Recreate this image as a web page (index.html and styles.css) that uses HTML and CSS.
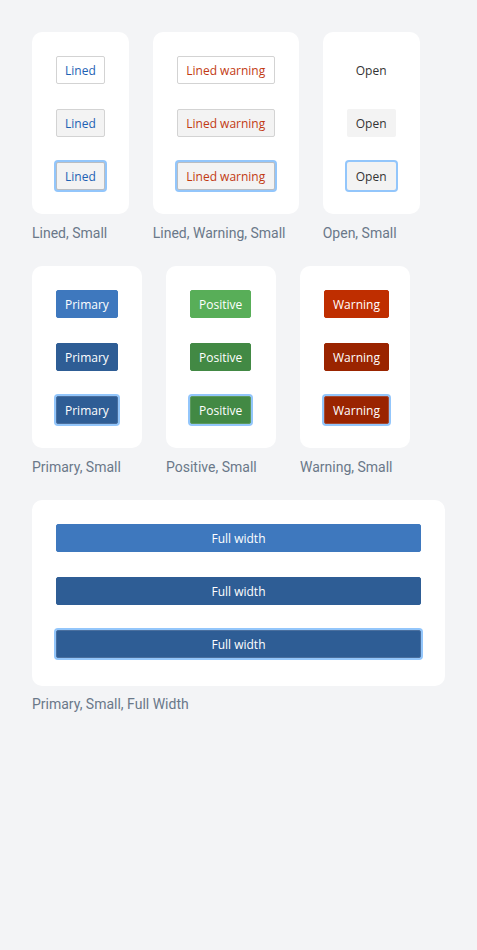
FILE: index.html
```html
<!DOCTYPE html>
<html>
<head>
<meta charset="utf-8">
<link rel="stylesheet" href="styles.css">
</head>
<body>
<div class="page">
  <div class="row">
    <div class="item">
      <div class="card">
        <button class="btn lined">Lined</button>
        <button class="btn lined hover">Lined</button>
        <button class="btn lined focus">Lined</button>
      </div>
      <div class="label">Lined, Small</div>
    </div>
    <div class="item">
      <div class="card">
        <button class="btn lined warn">Lined warning</button>
        <button class="btn lined warn hover">Lined warning</button>
        <button class="btn lined warn focus">Lined warning</button>
      </div>
      <div class="label">Lined, Warning, Small</div>
    </div>
    <div class="item">
      <div class="card">
        <button class="btn open">Open</button>
        <button class="btn open hover">Open</button>
        <button class="btn open focus">Open</button>
      </div>
      <div class="label">Open, Small</div>
    </div>
  </div>
  <div class="row">
    <div class="item">
      <div class="card fixed">
        <button class="btn primary">Primary</button>
        <button class="btn primary hover">Primary</button>
        <button class="btn primary focus">Primary</button>
      </div>
      <div class="label">Primary, Small</div>
    </div>
    <div class="item">
      <div class="card fixed">
        <button class="btn positive">Positive</button>
        <button class="btn positive hover">Positive</button>
        <button class="btn positive focus">Positive</button>
      </div>
      <div class="label">Positive, Small</div>
    </div>
    <div class="item">
      <div class="card fixed">
        <button class="btn warning">Warning</button>
        <button class="btn warning hover">Warning</button>
        <button class="btn warning focus">Warning</button>
      </div>
      <div class="label">Warning, Small</div>
    </div>
  </div>
  <div class="row">
    <div class="item wide">
      <div class="card full">
        <button class="btn primary block">Full width</button>
        <button class="btn primary block hover">Full width</button>
        <button class="btn primary block focus">Full width</button>
      </div>
      <div class="label last">Primary, Small, Full Width</div>
    </div>
  </div>
</div>
</body>
</html>
```
FILE: styles.css
```css
html, body {
  margin: 0;
  padding: 0;
  background: #f3f4f6;
}
.page {
  padding: 32px;
  display: flex;
  flex-direction: column;
  gap: 23px;
}
.row {
  display: flex;
  gap: 24px;
  align-items: flex-start;
}
.item {
  display: flex;
  flex-direction: column;
}
.item.wide {
  flex: 1;
}
.card {
  background: #fff;
  border-radius: 10px;
  padding: 24px;
  display: flex;
  flex-direction: column;
  align-items: flex-start;
  gap: 25px;
  box-sizing: border-box;
}
.card.fixed {
  width: 110px;
}
.card.full {
  align-items: stretch;
  padding-bottom: 28px;
}
.label {
  margin-top: 9px;
  font-family: Roboto, "Liberation Sans", sans-serif;
  font-size: 14px;
  line-height: 20px;
  color: #6a7889;
  white-space: nowrap;
}
.label.last {
  margin-top: 8px;
}
.btn {
  font-family: "Open Sans", "Liberation Sans", sans-serif;
  font-size: 12px;
  height: 28px;
  line-height: 24px;
  padding: 2px 8px 0;
  margin: 0;
  border: 1px solid transparent;
  border-radius: 2px;
  white-space: nowrap;
  box-sizing: border-box;
  flex: none;
}
.btn.block {
  width: 100%;
  text-align: center;
}
.btn.focus {
  box-shadow: 0 0 0 2px #93c6fb;
}
.lined {
  background: #fff;
  border-color: #d3d3d3;
  color: #1d62b4;
}
.lined.warn {
  color: #c23a12;
  padding-left: 8.5px;
  padding-right: 8.5px;
}
.lined.hover {
  background: #f3f3f3;
}
.lined.focus {
  background: #f3f3f3;
  border-color: #b9bdc2;
}
.open {
  background: transparent;
  color: #333;
}
.open.hover, .open.focus {
  background: #f3f3f3;
}
.primary {
  background: #3e78be;
  border-color: #3e78be;
  color: #fff;
}
.primary.hover, .primary.focus {
  background: #2e5d95;
  border-color: #2e5d95;
}
.primary.focus {
  border-color: #4a6f9e;
}
.positive {
  background: #58ae58;
  border-color: #58ae58;
  color: #fff;
}
.positive.hover, .positive.focus {
  background: #428944;
  border-color: #428944;
}
.positive.focus {
  border-color: #5d9a5e;
}
.warning {
  background: #bf2e00;
  border-color: #bf2e00;
  color: #fff;
}
.warning.hover, .warning.focus {
  background: #9a2400;
  border-color: #9a2400;
}
.warning.focus {
  border-color: #a54a33;
}
```
